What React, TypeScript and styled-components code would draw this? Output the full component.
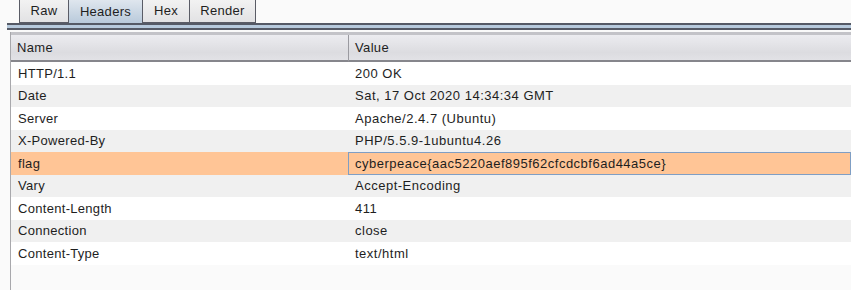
import * as React from 'react'
import styled, { createGlobalStyle } from 'styled-components'

const GlobalStyle = createGlobalStyle`
    html, body {
        margin: 0;
        padding: 0;
        background: #fafafa;
        font-family: "Liberation Sans", Arial, sans-serif;
        font-size: 13px;
        color: #1e1e1e;
        overflow: hidden;
    }
`

const TABS = ['Raw', 'Headers', 'Hex', 'Render']
const TAB_WIDTHS = [50, 74, 47, 66]

const HEADERS = [
    ['HTTP/1.1', '200 OK'],
    ['Date', 'Sat, 17 Oct 2020 14:34:34 GMT'],
    ['Server', 'Apache/2.4.7 (Ubuntu)'],
    ['X-Powered-By', 'PHP/5.5.9-1ubuntu4.26'],
    ['flag', 'cyberpeace{aac5220aef895f62cfcdcbf6ad44a5ce}'],
    ['Vary', 'Accept-Encoding'],
    ['Content-Length', '411'],
    ['Connection', 'close'],
    ['Content-Type', 'text/html'],
]

const SELECTED_ROW = 4

const Page = styled.div`
    width: 851px;
    height: 290px;
    background: #fafafa;
`

const TabBar = styled.div`
    display: flex;
    height: 23px;
    padding-left: 19px;
`

const Tab = styled.div<{ $active: boolean; $first: boolean }>`
    box-sizing: border-box;
    height: 24px;
    margin-top: -1px;
    border: 1px solid #5a5c66;
    border-left-width: ${p => (p.$first ? 1 : 0)}px;
    border-bottom: ${p => (p.$active ? 'none' : '1px solid #5a5c66')};
    background: ${p => p.$active
        ? 'linear-gradient(#dfe6ee, #b9cadb)'
        : 'linear-gradient(#f2f2f2, #e2e2e4)'};
    display: flex;
    align-items: center;
    justify-content: center;
    font-size: 13px;
    letter-spacing: 0.3px;
    color: #1e1e1e;
    position: relative;
    z-index: 1;
    padding-bottom: 1px;
`

const Strip = styled.div`
    margin-left: 7px;
    height: 7px;
    box-sizing: border-box;
    border-top: 2px solid #555a66;
    border-bottom: 2px solid #555a66;
    background: #b7cadd;
`

const Panel = styled.div`
    margin: 2px 0 0 10px;
    border-left: 1px solid #a8a8ac;
    height: 258px;
    background: #fafafa;
`

const TopLine = styled.div`
    height: 3px;
    background: #c3c3c8;
`

const Grid = styled.div`
    display: grid;
    grid-template-columns: 337px 1fr;
`

const HeadCell = styled.div<{ $divider?: boolean }>`
    box-sizing: border-box;
    height: 27px;
    padding: 0 6px;
    display: flex;
    align-items: center;
    background: linear-gradient(#ececf0, #dcdce0 70%, #e2e2e6);
    border-bottom: 2px solid #86868c;
    border-left: ${p => (p.$divider ? '1px solid #9a9aa0' : 'none')};
    font-size: 13px;
    letter-spacing: 0.35px;
`

const Cell = styled.div<{ $bg: string; $focus?: boolean; $value?: boolean }>`
    box-sizing: border-box;
    height: 22.5px;
    padding: 0 ${p => (p.$value ? 6 : 6)}px;
    display: flex;
    align-items: center;
    background: ${p => p.$bg};
    border: ${p => (p.$focus ? '1px solid #7f9ec4' : '1px solid transparent')};
    white-space: nowrap;
    font-size: 13px;
    letter-spacing: ${p => (p.$value ? 0.5 : 0.3)}px;
`

const rowColour = (i: number) => {
    if (i === SELECTED_ROW) return '#ffc596'
    return i % 2 === 0 ? '#ffffff' : '#f0f0f0'
}

const App = () => {
    const [tab, setTab] = React.useState('Headers')

    return (
        <Page>
            <GlobalStyle />
            <TabBar>
                {TABS.map((name, i) => (
                    <Tab
                        key={name}
                        $active={name === tab}
                        $first={i === 0}
                        style={{ width: TAB_WIDTHS[i] }}
                        onClick={() => setTab(name)}
                    >
                        {name}
                    </Tab>
                ))}
            </TabBar>
            <Strip />
            <Panel>
                <TopLine />
                <Grid>
                    <HeadCell>Name</HeadCell>
                    <HeadCell $divider>Value</HeadCell>
                    {HEADERS.map(([name, value], i) => (
                        <React.Fragment key={name}>
                            <Cell $bg={rowColour(i)}>{name}</Cell>
                            <Cell $bg={rowColour(i)} $focus={i === SELECTED_ROW} $value>{value}</Cell>
                        </React.Fragment>
                    ))}
                </Grid>
            </Panel>
        </Page>
    )
}

export default App
